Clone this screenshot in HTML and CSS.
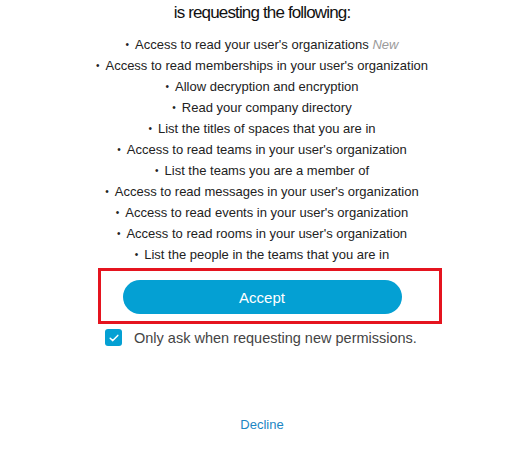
FILE: index.html
```html
<!DOCTYPE html>
<html>
<head>
<meta charset="utf-8">
<link rel="stylesheet" href="styles.css">
</head>
<body>
<main class="page">
  <h1 class="title">is requesting the following:</h1>
  <ul class="perms">
    <li>Access to read your user's organizations <em class="new">New</em></li>
    <li>Access to read memberships in your user's organization</li>
    <li>Allow decryption and encryption</li>
    <li>Read your company directory</li>
    <li>List the titles of spaces that you are in</li>
    <li>Access to read teams in your user's organization</li>
    <li>List the teams you are a member of</li>
    <li>Access to read messages in your user's organization</li>
    <li>Access to read events in your user's organization</li>
    <li>Access to read rooms in your user's organization</li>
    <li>List the people in the teams that you are in</li>
  </ul>
  <div class="accept-wrap">
    <button class="accept">Accept</button>
    <div class="highlight"></div>
  </div>
  <label class="check-row">
    <span class="box">
      <svg width="10" height="8" viewBox="0 0 10 8"><path d="M1.2 4.2 L3.8 6.6 L8.8 1.4" fill="none" stroke="#fff" stroke-width="1.5" stroke-linecap="round" stroke-linejoin="round"/></svg>
    </span>
    <span class="check-text">Only ask when requesting new permissions.</span>
  </label>
  <a class="decline" href="#">Decline</a>
</main>
</body>
</html>
```
FILE: styles.css
```css
html, body {
  margin: 0;
  padding: 0;
  background: #fff;
}
body {
  font-family: "Liberation Sans", Arial, sans-serif;
  width: 516px;
  height: 450px;
  overflow: hidden;
}
.page {
  display: flex;
  flex-direction: column;
  align-items: center;
  padding-left: 8px;
}
.title {
  margin: 2px 0 0;
  font-size: 17px;
  font-weight: normal;
  line-height: 22px;
  letter-spacing: -0.85px;
  color: #111;
}
.perms {
  list-style: none;
  margin: 10px 0 0;
  padding: 0;
  text-align: center;
  font-size: 13px;
  line-height: 21px;
  color: #222;
}
.perms li::before {
  content: "\2022";
  font-size: 10px;
  vertical-align: 1px;
  margin-right: 6px;
}
.new {
  color: #9a9a9a;
}
.accept-wrap {
  position: relative;
  margin-top: 15px;
}
.accept {
  display: block;
  width: 279px;
  height: 34px;
  border: none;
  border-radius: 17px;
  background: #04a0d3;
  color: #fff;
  font-family: "Liberation Sans", Arial, sans-serif;
  font-size: 15px;
}
.highlight {
  position: absolute;
  left: -25px;
  top: -12px;
  width: 338px;
  height: 50px;
  border: 3px solid #e5141f;
}
.check-row {
  align-self: flex-start;
  margin: 15px 0 0 97px;
  display: flex;
  align-items: center;
  gap: 12px;
}
.box {
  width: 17px;
  height: 17px;
  border-radius: 3px;
  background: #04a0d3;
  display: flex;
  align-items: center;
  justify-content: center;
}
.check-text {
  font-size: 14.5px;
  color: #444;
}
.decline {
  margin-top: 71px;
  font-size: 13px;
  color: #1c86c4;
  text-decoration: none;
}
```
